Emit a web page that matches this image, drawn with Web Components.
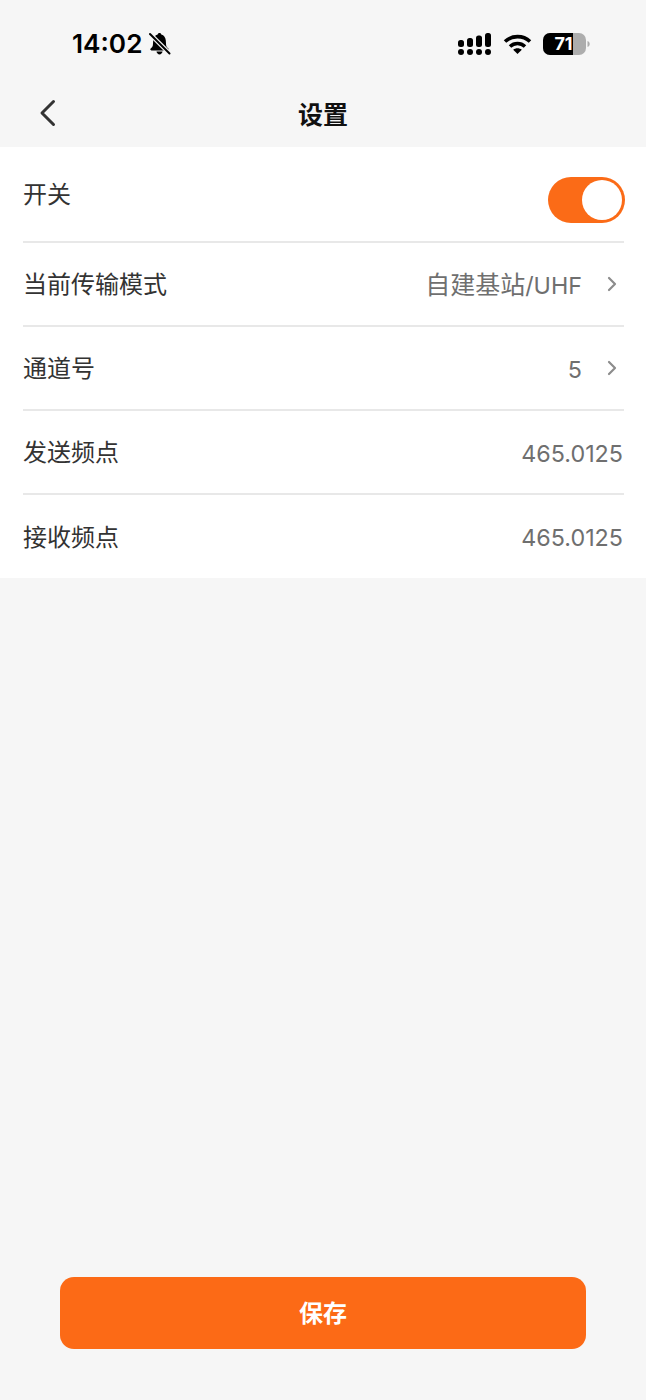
<!DOCTYPE html>
<html lang="zh">
<head>
<meta charset="utf-8">
<title>设置</title>
<style>
    html, body { margin: 0; padding: 0; }
    body {
        width: 646px;
        height: 1400px;
        background: #f6f6f6;
        font-family: Inter, "Noto Sans CJK SC", sans-serif;
        display: flex;
        flex-direction: column;
        overflow: hidden;
    }
    .list { display: block; background: #fff; }
    .grow { flex: 1; }
</style>
</head>
<body>
<status-bar></status-bar>
<nav-bar>设置</nav-bar>
<div class="list">
    <setting-row class="first" divider>开关<toggle-switch slot="end"></toggle-switch></setting-row>
    <setting-row divider arrow value="自建基站/UHF">当前传输模式</setting-row>
    <setting-row divider arrow value="5">通道号</setting-row>
    <setting-row divider value="465.0125">发送频点</setting-row>
    <setting-row class="last" value="465.0125">接收频点</setting-row>
</div>
<div class="grow"></div>
<save-button>保存</save-button>

<script>
class StatusBar extends HTMLElement {
    connectedCallback() {
        this.attachShadow({ mode: 'open' });
        this.shadowRoot.innerHTML = `
            <style>
                :host {
                    display: flex;
                    align-items: center;
                    justify-content: space-between;
                    height: 88px;
                    padding: 0 56px 0 72px;
                    box-sizing: border-box;
                    color: #000;
                }
                .left, .right { display: flex; align-items: center; }
                .time { font: 600 26.200px/1 Inter, sans-serif; }
                .bell { margin-left: 6px; }
                .wifi { margin-left: 12px; }
                .battery { margin-left: 11px; display: grid; }
                .battery > * { grid-area: 1 / 1; }
                .pct {
                    font: 700 18px/22px Inter, sans-serif;
                    color: #fff;
                    text-align: center;
                    padding-right: 6px;
                }
            </style>
            <div class="left">
                <span class="time">14:02</span>
                <svg class="bell" width="23" height="24" viewBox="0 0 23 24">
                    <path d="M11.500 1c-1 0-1.700.7-1.800 1.600C6.900 3.400 5.400 5.600 5.200 8.600l-.3 4.400c-.1 1.500-1.100 2.600-2.200 3.600-.8.700-.4 1.800.7 1.800h16.200c1.100 0 1.500-1.100.7-1.800-1.100-1-2.100-2.100-2.200-3.600l-.3-4.400c-.2-3-1.700-5.200-4.500-6-.1-.9-.8-1.600-1.800-1.600z" fill="#000"/>
                    <path d="M8.500 19.600c.3 1.700 1.500 2.900 3 2.900s2.700-1.200 3-2.900z" fill="#000"/>
                    <path d="M2 2l19.500 19.500" stroke="#f6f6f6" stroke-width="4.500"/>
                    <path d="M2 2l19.500 19.500" stroke="#000" stroke-width="2" stroke-linecap="round"/>
                </svg>
            </div>
            <div class="right">
                <svg width="33" height="23" viewBox="0 0 33 23" fill="#000">
                    <rect x="0" y="7" width="6" height="7" rx="2.500"/><circle cx="3" cy="19" r="3"/>
                    <rect x="9" y="5" width="6" height="9" rx="2.500"/><circle cx="12" cy="19" r="3"/>
                    <rect x="18" y="2.500" width="6" height="11.500" rx="2.500"/><circle cx="21" cy="19" r="3"/>
                    <rect x="27" y="0" width="6" height="14" rx="2.500"/><circle cx="30" cy="19" r="3"/>
                </svg>
                <svg class="wifi" width="29" height="22" viewBox="0 0 29 22" fill="none" stroke="#000" stroke-width="3.600">
                    <path d="M2 8.500C9 2 20 2 27 8.500"/>
                    <path d="M7 13.500c4.300-4 10.700-4 15 0"/>
                    <path d="M14.500 21l-4.300-4.300c2.400-2 6.200-2 8.600 0z" fill="#000" stroke="none"/>
                </svg>
                <div class="battery">
                    <svg width="47" height="22" viewBox="0 0 47 22">
                        <rect x="0" y="0" width="43" height="22" rx="7" fill="#adadad"/>
                        <path d="M7 0h23v22H7a7 7 0 0 1-7-7V7a7 7 0 0 1 7-7z" fill="#000"/>
                        <path d="M44.500 8c1.500.5 2.200 1.600 2.200 3s-.7 2.500-2.200 3z" fill="#adadad"/>
                    </svg>
                    <span class="pct">71</span>
                </div>
            </div>
        `;
    }
}
customElements.define('status-bar', StatusBar);

class NavBar extends HTMLElement {
    connectedCallback() {
        this.attachShadow({ mode: 'open' });
        this.shadowRoot.innerHTML = `
            <style>
                :host {
                    display: grid;
                    grid-template-columns: 1fr auto 1fr;
                    align-items: center;
                    height: 59px;
                    padding: 0 38px 10px;
                    box-sizing: border-box;
                }
                .title {
                    font: 700 25px/32px "Noto Sans CJK SC", sans-serif;
                    color: #111;
                }
                svg { display: block; }
            </style>
            <svg width="20" height="28" viewBox="0 0 20 28" fill="none" stroke="#333" stroke-width="3" stroke-linecap="round" stroke-linejoin="round">
                <path d="M15.500 2.500L4 14l11.500 11.500"/>
            </svg>
            <div class="title"><slot></slot></div>
            <div></div>
        `;
    }
}
customElements.define('nav-bar', NavBar);

class SettingRow extends HTMLElement {
    connectedCallback() {
        const value = this.getAttribute('value');
        const arrow = this.hasAttribute('arrow');
        // latin digits in the reference run a bit narrower than the CJK glyphs
        const valueHtml = value ? value.replace(/[\u4e00-\u9fff]+/g, m => `<span class="cjk">${m}</span>`) : '';
        this.attachShadow({ mode: 'open' });
        this.shadowRoot.innerHTML = `
            <style>
                :host {
                    display: block;
                    padding: 0 22px 0 23px;
                }
                .row {
                    display: flex;
                    align-items: center;
                    justify-content: space-between;
                    height: 84px;
                    padding-bottom: 2px;
                    box-sizing: border-box;
                }
                :host(.first) .row { height: 96px; }
                :host(.last) .row { height: 83px; }
                :host([divider]) .row { border-bottom: 2px solid #e8e8e8; }
                .label {
                    font: 400 24px/32px "Noto Sans CJK SC", sans-serif;
                    color: #333;
                }
                .end { display: flex; align-items: center; }
                .value {
                    font: 400 23.300px/32px Inter, "Noto Sans CJK SC", sans-serif;
                    color: #6f6f6f;
                    padding-top: 5px;
                    margin-right: 1px;
                }
                .cjk { font-size: 25px; }
                .arrow { margin: 2px 7px 0 24px; display: block; }
                ::slotted(toggle-switch) { margin: 14px -1px 0 0; }
            </style>
            <div class="row">
                <span class="label"><slot></slot></span>
                <div class="end">
                    <slot name="end"></slot>
                    ${value ? `<span class="value">${valueHtml}</span>` : ''}
                    ${arrow ? `<svg class="arrow" width="10" height="16" viewBox="0 0 10 16" fill="none" stroke="#8c8c8c" stroke-width="2.200" stroke-linecap="round" stroke-linejoin="round"><path d="M2 2l6 6-6 6"/></svg>` : ''}
                </div>
            </div>
        `;
    }
}
customElements.define('setting-row', SettingRow);

class ToggleSwitch extends HTMLElement {
    connectedCallback() {
        this.attachShadow({ mode: 'open' });
        this.shadowRoot.innerHTML = `
            <style>
                :host {
                    display: flex;
                    justify-content: flex-end;
                    align-items: center;
                    width: 77px;
                    height: 46px;
                    padding: 3px;
                    box-sizing: border-box;
                    border-radius: 23px;
                    background: #fb6b17;
                }
                .knob {
                    width: 40px;
                    height: 40px;
                    border-radius: 50%;
                    background: #fff;
                }
            </style>
            <div class="knob"></div>
        `;
    }
}
customElements.define('toggle-switch', ToggleSwitch);

class SaveButton extends HTMLElement {
    connectedCallback() {
        this.attachShadow({ mode: 'open' });
        this.shadowRoot.innerHTML = `
            <style>
                :host {
                    display: flex;
                    justify-content: center;
                    align-items: center;
                    height: 72px;
                    margin: 0 60px 51px;
                    padding-bottom: 2px;
                    box-sizing: border-box;
                    border-radius: 14px;
                    background: #fc6a16;
                    color: #fff;
                    font: 700 24px/32px "Noto Sans CJK SC", sans-serif;
                }
            </style>
            <slot></slot>
        `;
    }
}
customElements.define('save-button', SaveButton);
</script>
</body>
</html>
